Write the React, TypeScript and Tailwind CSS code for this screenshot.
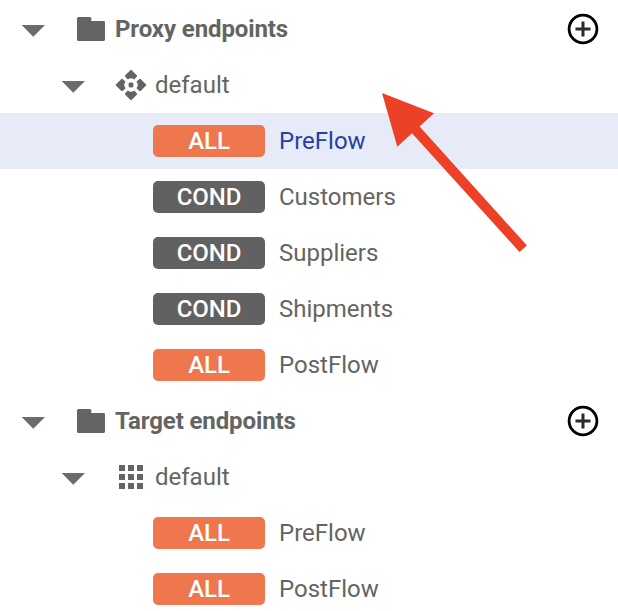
import React from "react";

function Caret() {
  return (
    <svg className="mt-[3px] h-3 w-6 shrink-0" viewBox="0 0 24 12" fill="#6a6c6a">
      <path d="M.7 0H24L12.300 11.800Z" />
    </svg>
  );
}

function Folder() {
  return (
    <svg className="h-6 w-7 shrink-0" viewBox="0 0 28 24" fill="#636563">
      <path d="M1 0H13.3L14.3 1V4H27L28 5V23L27 24H1L0 23V1Z" />
    </svg>
  );
}

function AddButton() {
  return (
    <button className="ml-auto" aria-label="Add">
      <svg className="block size-8" viewBox="0 0 32 32" fill="none">
        <circle cx="16" cy="16" r="13.900" stroke="#000" strokeWidth="2.800" />
        <path d="M16 8.500V23.500M8.500 16H23.500" stroke="#2a2a2a" strokeWidth="3" />
      </svg>
    </button>
  );
}

function ProxyIcon() {
  return (
    <svg className="size-8 shrink-0" viewBox="0 0 32 32" fill="#636563">
      {[0, 90, 180, 270].map((angle) => (
        <path
          key={angle}
          transform={`rotate(${angle} 16 16)`}
          d="M16 .4L22 6.400V7.600L19.200 10.600Q16 7.800 12.800 10.600L10 7.600V6.400Z"
        />
      ))}
      <rect x="13.600" y="13.600" width="4.800" height="4.800" rx="1.400" />
    </svg>
  );
}

function GridIcon() {
  return (
    <svg className="size-8 shrink-0" viewBox="0 0 32 32" fill="#636563">
      {[4, 13, 22].map((y) =>
        [4, 13, 22].map((x) => (
          <rect key={`${x}-${y}`} x={x} y={y} width="6" height="6" />
        )),
      )}
    </svg>
  );
}

function Section({ label }: { label: string }) {
  return (
    <div className="flex h-14 items-center pr-[19px] pl-[21px]">
      <Caret />
      <span className="ml-8">
        <Folder />
      </span>
      <span className="ml-2.5 font-bold tracking-[-0.11px]">{label}</span>
      <AddButton />
    </div>
  );
}

function Endpoint({ icon }: { icon: React.ReactNode }) {
  return (
    <div className="flex h-14 items-center pl-[61px]">
      <Caret />
      <span className="ml-[30px]">{icon}</span>
      <span className="ml-2">default</span>
    </div>
  );
}

function Flow({
  label,
  cond,
  selected,
}: {
  label: string;
  cond?: boolean;
  selected?: boolean;
}) {
  return (
    <div
      className={`flex h-14 items-center pl-[153px] ${selected ? "bg-[#e6ebf7] text-[#2640a5]" : ""}`}
    >
      <span
        className={`flex h-8 w-28 items-center justify-center rounded-[5px] font-medium tracking-[-0.1px] text-white ${cond ? "bg-[#616161]" : "bg-[#ee774e]"}`}
      >
        {cond ? "COND" : "ALL"}
      </span>
      <span className="ml-3.5">{label}</span>
    </div>
  );
}

export default function App() {
  return (
    <main className="relative h-[611px] w-[618px] overflow-hidden bg-white pt-px font-['Roboto',sans-serif] text-2xl text-[#636563]">
      <Section label="Proxy endpoints" />
      <Endpoint icon={<ProxyIcon />} />
      <Flow label="PreFlow" selected />
      <Flow label="Customers" cond />
      <Flow label="Suppliers" cond />
      <Flow label="Shipments" cond />
      <Flow label="PostFlow" />
      <Section label="Target endpoints" />
      <Endpoint icon={<GridIcon />} />
      <Flow label="PreFlow" />
      <Flow label="PostFlow" />
      <svg
        className="pointer-events-none absolute top-[90px] left-[380px] h-[165px] w-[150px]"
        viewBox="380 90 150 165"
        fill="#ed4127"
      >
        <path d="M382 93L434 113.300L419.600 126.500L527 245.500L519.500 252L412 133.300L397.300 146.700Z" />
      </svg>
    </main>
  );
}
